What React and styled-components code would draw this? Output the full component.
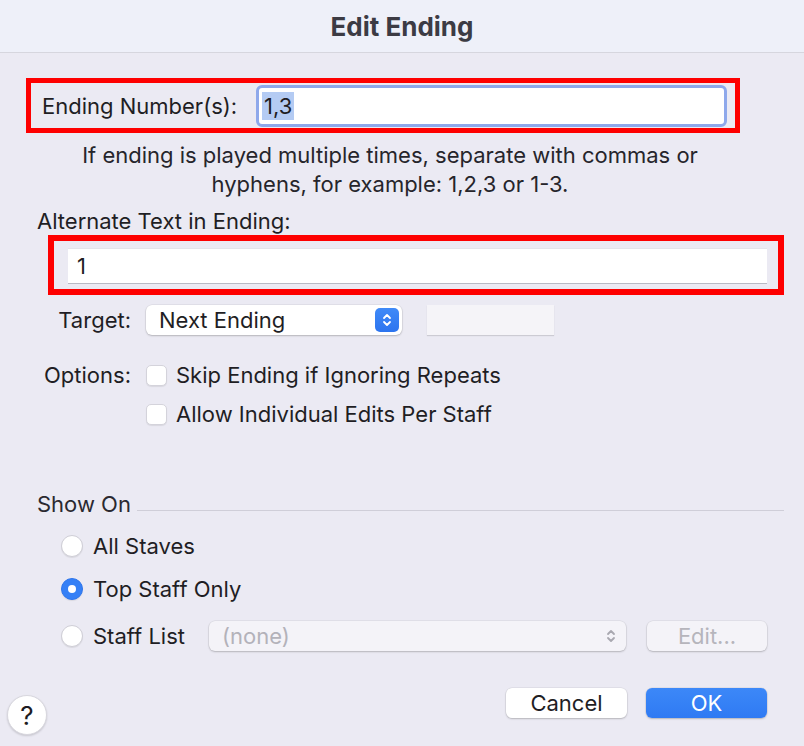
import React from 'react'
import styled, { createGlobalStyle } from 'styled-components'

// Dialog "Edit Ending" in the macOS look

const GlobalStyle = createGlobalStyle`
  html, body {
    margin: 0;
    padding: 0;
    background: #ebeaf3;
  }
  body {
    font-family: Inter, "Noto Sans", "Liberation Sans", sans-serif;
    color: #1f1e24;
  }
`

const Window = styled.div`
  width: 804px;
  height: 746px;
  background: #ebeaf3;
  display: flex;
  flex-direction: column;
  overflow: hidden;
`

const TitleBar = styled.div`
  height: 52px;
  flex: none;
  background: #eef0f9;
  border-bottom: 1px solid #d6d6de;
  display: flex;
  align-items: center;
  justify-content: center;
  font-size: 26px;
  font-weight: 700;
  color: #3c3b44;
`

const Body = styled.div`
  display: flex;
  flex-direction: column;
  flex: 1;
`

const RedBox = styled.div`
  box-sizing: border-box;
  display: flex;
  align-items: center;
  margin-top: ${(p) => p.$mt}px;
  margin-left: ${(p) => p.$left}px;
  width: ${(p) => p.$width}px;
  height: ${(p) => p.$height}px;
  border: ${(p) => p.$border}px solid #fe0000;
  padding-left: ${(p) => p.$pl}px;
`

const InlineLabel = styled.span`
  width: 214px;
  flex: none;
  font-size: 22px;
`

const FocusInput = styled.div`
  box-sizing: border-box;
  width: 471px;
  height: 42px;
  border: 3px solid #8ea8eb;
  border-radius: 6px;
  background: #fff;
  display: flex;
  align-items: center;
  padding-left: 3px;
  font-size: 22px;
`

const Selected = styled.span`
  background: #b4cbf3;
  padding: 1px 2px;
`

const TextInput = styled.div`
  box-sizing: border-box;
  width: 699px;
  height: 35px;
  background: #fff;
  border-top: 1px solid #e4e4ea;
  box-shadow: 0 1px 0 #b9b9c4;
  display: flex;
  align-items: center;
  padding-left: 9px;
  font-size: 22px;
`

const HelpText = styled.p`
  margin: 8px 0 0;
  width: 780px;
  text-align: center;
  font-size: 22px;
  line-height: 29px;
  color: #26252b;
`

const SectionLabel = styled.div`
  margin-top: ${(p) => p.$mt}px;
  padding-left: 37px;
  font-size: 22px;
  line-height: 24px;
`

const FieldRow = styled.div`
  display: grid;
  grid-template-columns: 131px auto;
  column-gap: 15px;
  align-items: center;
  height: 30px;
  margin-top: ${(p) => p.$mt}px;
`

const RowLabel = styled.span`
  text-align: right;
  font-size: 22px;
`

const RowContent = styled.div`
  display: flex;
  align-items: center;
`

const Popup = styled.div`
  box-sizing: border-box;
  width: ${(p) => p.$width}px;
  height: 30px;
  border-radius: 6px;
  background: ${(p) => (p.$disabled ? '#f4f3f8' : '#fff')};
  box-shadow: 0 0 0 0.5px rgba(0, 0, 0, 0.08), 0 1px 2px rgba(0, 0, 0, 0.2);
  display: flex;
  align-items: center;
  justify-content: space-between;
  padding: 0 3px 0 13px;
  font-size: 22px;
  color: ${(p) => (p.$disabled ? '#b3b2ba' : '#1f1e24')};
`

const Stepper = styled.span`
  width: 24px;
  height: 24px;
  border-radius: 5px;
  background: ${(p) => (p.$disabled ? 'transparent' : 'linear-gradient(#3f8af8, #2c74ef)')};
  display: flex;
  align-items: center;
  justify-content: center;
`

const BlankField = styled.div`
  margin-left: 25px;
  width: 127px;
  height: 30px;
  background: #f5f4f8;
  box-shadow: 0 1px 1px rgba(0, 0, 0, 0.13);
`

const Checkbox = styled.span`
  box-sizing: border-box;
  width: 21px;
  height: 21px;
  border-radius: 5px;
  background: #fff;
  border: 1px solid #d4d3db;
  box-shadow: 0 1px 1px rgba(0, 0, 0, 0.08);
  flex: none;
`

const OptionText = styled.span`
  margin-left: 9px;
  font-size: 22px;
`

const GroupHeader = styled.div`
  margin-top: 63px;
  padding-left: 37px;
  width: 747px;
  height: 24px;
  display: flex;
  font-size: 22px;
  line-height: 24px;
  color: #2a2930;
`

const GroupLine = styled.span`
  flex: 1;
  align-self: flex-end;
  margin: 0 0 5px 6px;
  height: 1px;
  background: #cfced8;
`

const RadioRow = styled.div`
  display: flex;
  align-items: center;
  padding-left: 61px;
  height: ${(p) => p.$height || 30}px;
  margin-top: ${(p) => p.$mt}px;
`

const Radio = styled.span`
  box-sizing: border-box;
  width: 22px;
  height: 22px;
  border-radius: 50%;
  flex: none;
  display: flex;
  align-items: center;
  justify-content: center;
  background: ${(p) => (p.$on ? '#3580f6' : '#fff')};
  border: 1px solid ${(p) => (p.$on ? '#2f76ec' : '#cfced6')};
  box-shadow: 0 1px 1px rgba(0, 0, 0, 0.08);
  &::after {
    content: '';
    display: ${(p) => (p.$on ? 'block' : 'none')};
    width: 8px;
    height: 8px;
    border-radius: 50%;
    background: #fff;
  }
`

const RadioText = styled.span`
  margin-left: 10px;
  font-size: 22px;
  width: ${(p) => (p.$w ? `${p.$w}px` : 'auto')};
`

const Footer = styled.div`
  display: flex;
  align-items: flex-start;
  margin-top: 36px;
  padding: 0 37px 0 7px;
`

const HelpButton = styled.span`
  box-sizing: border-box;
  margin-top: 7px;
  width: 40px;
  height: 40px;
  border-radius: 50%;
  background: #fff;
  border: 1px solid #d8d7de;
  box-shadow: 0 1px 2px rgba(0, 0, 0, 0.15);
  display: flex;
  align-items: center;
  justify-content: center;
  font-size: 26px;
  color: #1d1c22;
`

const Spacer = styled.span`
  flex: 1;
`

const Button = styled.span`
  box-sizing: border-box;
  width: ${(p) => p.$width || 121}px;
  height: 30px;
  margin-left: ${(p) => p.$ml || 0}px;
  border-radius: 6px;
  display: flex;
  align-items: center;
  justify-content: center;
  font-size: 22px;
  background: ${(p) => (p.$primary ? 'linear-gradient(#3c88f8, #2f7af3)' : p.$disabled ? '#f4f3f8' : '#fff')};
  color: ${(p) => (p.$primary ? '#fff' : p.$disabled ? '#b6b5bc' : '#1f1e24')};
  box-shadow: 0 0 0 0.5px rgba(0, 0, 0, 0.08), 0 1px 2px rgba(0, 0, 0, 0.2);
`

const Chevrons = ({ color }) => (
  <svg width='12' height='16' viewBox='0 0 12 16' fill='none' stroke={color} strokeWidth='1.8' strokeLinecap='round' strokeLinejoin='round'>
    <path d='M3 6l3-3 3 3' />
    <path d='M3 10l3 3 3-3' />
  </svg>
)

const App = () => {
  return (
    <Window>
      <GlobalStyle />
      <TitleBar>Edit Ending</TitleBar>
      <Body>
        <RedBox $mt={25} $left={26} $width={714} $height={55} $border={5} $pl={11}>
          <InlineLabel>Ending Number(s):</InlineLabel>
          <FocusInput>
            <Selected>1,3</Selected>
          </FocusInput>
        </RedBox>

        <HelpText>
          If ending is played multiple times, separate with commas or
          <br />
          hyphens, for example: 1,2,3 or 1-3.
        </HelpText>

        <SectionLabel $mt={10}>Alternate Text in Ending:</SectionLabel>
        <RedBox $mt={2} $left={48} $width={736} $height={60} $border={6} $pl={14}>
          <TextInput>1</TextInput>
        </RedBox>

        <FieldRow $mt={10}>
          <RowLabel>Target:</RowLabel>
          <RowContent>
            <Popup $width={256}>
              Next Ending
              <Stepper>
                <Chevrons color='#fff' />
              </Stepper>
            </Popup>
            <BlankField />
          </RowContent>
        </FieldRow>

        <FieldRow $mt={25}>
          <RowLabel>Options:</RowLabel>
          <RowContent>
            <Checkbox />
            <OptionText>Skip Ending if Ignoring Repeats</OptionText>
          </RowContent>
        </FieldRow>
        <FieldRow $mt={9}>
          <span />
          <RowContent>
            <Checkbox />
            <OptionText>Allow Individual Edits Per Staff</OptionText>
          </RowContent>
        </FieldRow>

        <GroupHeader>
          Show On
          <GroupLine />
        </GroupHeader>

        <RadioRow $mt={15}>
          <Radio />
          <RadioText>All Staves</RadioText>
        </RadioRow>
        <RadioRow $mt={13}>
          <Radio $on />
          <RadioText>Top Staff Only</RadioText>
        </RadioRow>
        <RadioRow $mt={16} $height={32}>
          <Radio />
          <RadioText $w={116}>Staff List</RadioText>
          <Popup $width={417} $disabled>
            (none)
            <Stepper $disabled>
              <Chevrons color='#a9a8b0' />
            </Stepper>
          </Popup>
          <Button $width={120} $ml={21} $disabled>
            Edit...
          </Button>
        </RadioRow>

        <Footer>
          <HelpButton>?</HelpButton>
          <Spacer />
          <Button>Cancel</Button>
          <Button $primary $ml={19}>
            OK
          </Button>
        </Footer>
      </Body>
    </Window>
  )
}

export default App
